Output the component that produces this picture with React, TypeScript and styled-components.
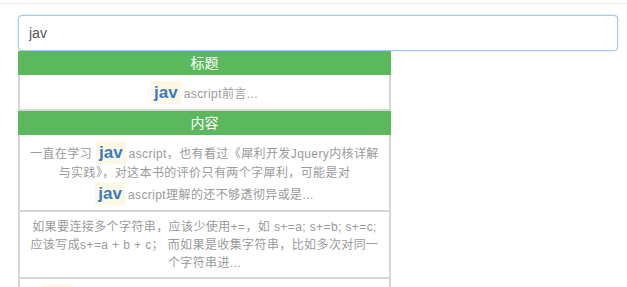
import React from "react";
import styled, { createGlobalStyle } from "styled-components";

const GlobalStyle = createGlobalStyle`
  html, body {
    margin: 0;
    padding: 0;
    background: #ffffff;
    font-family: "Liberation Sans", "Noto Sans CJK SC", sans-serif;
  }
  * { box-sizing: border-box; }
`;

const TopBar = styled.div`
  height: 4px;
  border-bottom: 1px solid #ececec;
`;

const Page = styled.div`
  padding: 11px 0 0 18px;
`;

const SearchBox = styled.div`
  display: flex;
  flex-direction: column;
  width: 600px;
`;

const Input = styled.input`
  display: block;
  width: 600px;
  height: 36px;
  padding: 0 10px;
  border: 1px solid #9ecbef;
  border-radius: 4px;
  box-shadow: 0 0 2px rgba(102, 175, 233, 0.5);
  outline: none;
  font-family: "Liberation Sans", "Noto Sans CJK SC", sans-serif;
  font-size: 14px;
  color: #555555;
  background: #ffffff;
`;

const Menu = styled.div`
  width: 373px;
  background: #ffffff;
  border-left: 2px solid #d6d6d6;
  border-right: 2px solid #d6d6d6;
`;

const GroupHeader = styled.div`
  height: 24px;
  line-height: 24px;
  margin: 0 -2px;
  background: #5cb85c;
  color: #ffffff;
  text-align: center;
  font-size: 14px;
`;

const Item = styled.div`
  padding: 6px 6px 5px;
  border-bottom: 2px solid #d6d6d6;
  text-align: center;
  font-size: 12px;
  letter-spacing: 0.4px;
  line-height: 18px;
  color: #9a9a9a;
  white-space: nowrap;
  overflow: hidden;
`;

const Hit = styled.span`
  display: inline-block;
  padding: 0 3px;
  margin-right: 3px;
  line-height: 23px;
  font-size: 17px;
  letter-spacing: 0;
  font-weight: bold;
  color: #3a7cc0;
  background: #fdf8e4;
`;

export default function App() {
  return (
    <>
      <GlobalStyle />
      <TopBar />
      <Page>
        <SearchBox>
          <Input defaultValue="jav" />
          <Menu>
            <GroupHeader>标题</GroupHeader>
            <Item>
              <Hit>jav</Hit>ascript前言...
            </Item>
            <GroupHeader>内容</GroupHeader>
            <Item>
              一直在学习 <Hit>jav</Hit>ascript，也有看过《犀利开发Jquery内核详解
              <br />
              与实践》，对这本书的评价只有两个字犀利，可能是对
              <br />
              <Hit>jav</Hit>ascript理解的还不够透彻异或是...
            </Item>
            <Item>
              如果要连接多个字符串，应该少使用+=，如 s+=a; s+=b; s+=c;
              <br />
              应该写成s+=a + b + c； 而如果是收集字符串，比如多次对同一
              <br />
              个字符串进...
            </Item>
            <Item>
              <Hit>jav</Hit>ascript中字符串拼接的性能问题，以及数组join方法...
            </Item>
          </Menu>
        </SearchBox>
      </Page>
    </>
  );
}
